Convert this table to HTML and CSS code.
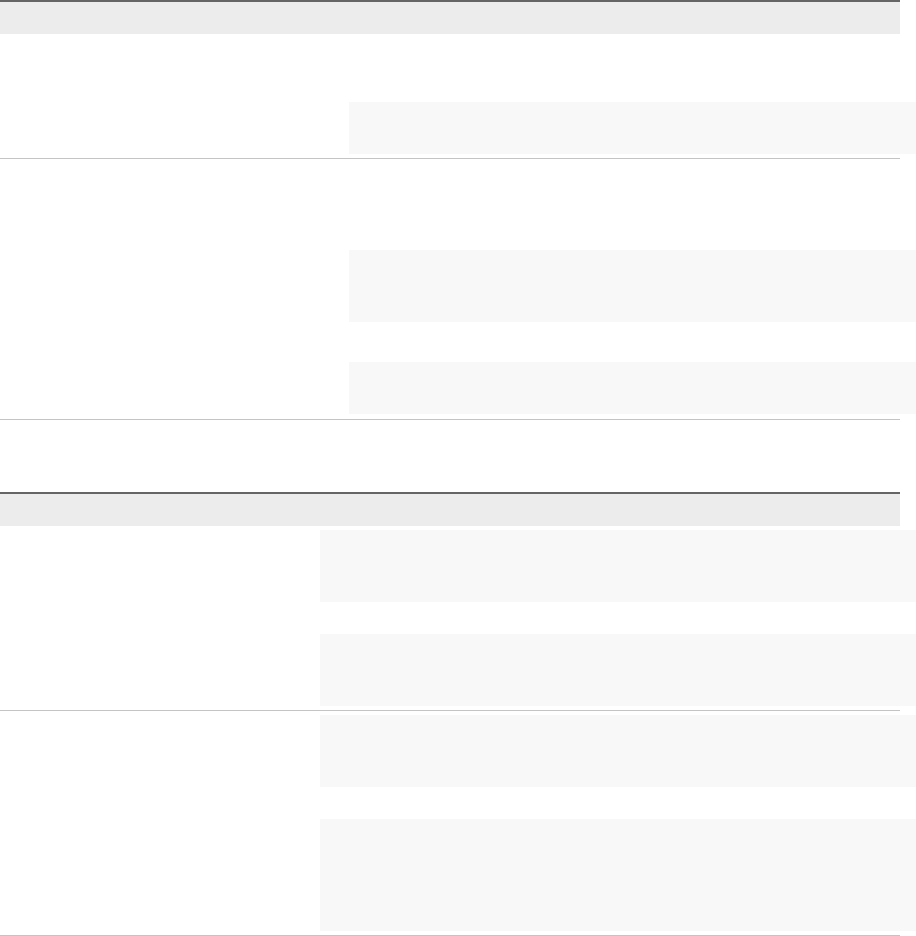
FILE: index.html
```html
<!DOCTYPE html>
<html>
<head>
<meta charset="utf-8">
<link rel="stylesheet" href="styles.css">
</head>
<body>
<div class="table t1">
  <div class="thead"></div>
  <div class="row r1">
    <div class="cell"></div>
    <div class="cell right"><div class="code h52"></div></div>
  </div>
  <div class="row r2">
    <div class="cell"></div>
    <div class="cell right"><div class="code h72"></div><div class="code h52 g40"></div></div>
  </div>
</div>
<div class="table t2">
  <div class="thead"></div>
  <div class="row r3">
    <div class="cell"></div>
    <div class="cell right"><div class="code h72"></div><div class="code h72 g32"></div></div>
  </div>
  <div class="row r4">
    <div class="cell"></div>
    <div class="cell right"><div class="code h72"></div><div class="code h112 g32"></div></div>
  </div>
</div>
</body>
</html>
```
FILE: styles.css
```css
html, body { margin: 0; padding: 0; background: #fff; font-family: "Liberation Sans", Arial, sans-serif; }
.table { width: 900px; }
.t2 { margin-top: 72px; }
.thead { border-top: 2px solid #656565; height: 32px; background: #ececec; }
.row { display: grid; border-bottom: 1px solid #c4c4c4; }
.t1 .row { grid-template-columns: 349px 1fr; }
.t2 .row { grid-template-columns: 320px 1fr; }
.right { margin-right: -16px; }
.code { background: #f8f8f8; }
.h52 { height: 52px; }
.h72 { height: 72px; }
.h112 { height: 112px; }
.g40 { margin-top: 40px; }
.g32 { margin-top: 32px; }
.r1 .right { padding: 68px 0 4px; }
.r2 .right { padding: 91px 0 5px; }
.r3 .right, .r4 .right { padding: 4px 0 4px; }
```
